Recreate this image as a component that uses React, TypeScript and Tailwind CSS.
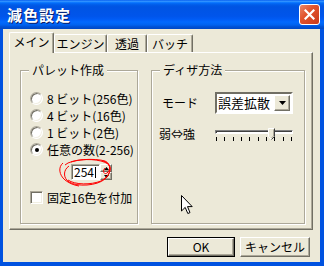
import React from 'react';

const FONT = "font-['Noto_Sans_CJK_JP','Liberation_Sans',sans-serif]";

const Radio = ({ checked }: { checked?: boolean }) => (
  <span className="relative flex items-center justify-center w-[13px] h-[13px] shrink-0 rounded-full bg-white border border-t-[#ACA899] border-l-[#ACA899] border-r-white border-b-white shadow-[inset_1px_1px_0_#716F64,inset_-1px_-1px_0_#F1EFE2]">
    {checked && <span className="w-[4px] h-[4px] rounded-full bg-black" />}
  </span>
);

const RadioRow = ({ label, checked }: { label: string; checked?: boolean }) => (
  <div className="flex items-center h-[17px] gap-[4px]">
    <Radio checked={checked} />
    <span className="text-[12px] leading-[14px] text-black whitespace-nowrap">{label}</span>
  </div>
);

const Bevel = ({ className = '', children }: { className?: string; children?: React.ReactNode }) => (
  <div className={`flex items-center justify-center bg-[#ECE9D8] border border-t-white border-l-white border-r-[#716F64] border-b-[#716F64] shadow-[inset_-1px_-1px_0_#ACA899] ${className}`}>
    {children}
  </div>
);

const Group = ({ title, className = '', children }: { title: string; className?: string; children?: React.ReactNode }) => (
  <div className={`relative border border-[#ACA899] shadow-[inset_1px_1px_0_#fff,1px_1px_0_#fff] ${className}`}>
    <span className="absolute -top-[9px] left-[8px] px-[3px] bg-[#ECE9D8] text-[12px] leading-[16px] text-black">{title}</span>
    {children}
  </div>
);

const Tab = ({ label, active, w }: { label: string; active?: boolean; w: string }) => (
  <div
    className={`flex items-center justify-center bg-[#ECE9D8] rounded-t-[2px] border-l border-t border-l-white border-t-white border-r border-r-[#716F64] shadow-[inset_-1px_0_0_#ACA899] text-[12px] leading-[14px] text-black ${w} ${
      active ? 'h-[21px] -mb-px relative z-10 pb-[2px]' : 'h-[18px]'
    }`}
  >
    {label}
  </div>
);

export default function App() {
  const ticks = Array.from({ length: 10 });

  return (
    <div className={`relative w-[324px] h-[266px] flex flex-col bg-[#0052E0] ${FONT}`}>
      {/* Title bar */}
      <div className="h-[29px] flex items-center justify-between pl-[7px] pr-[4px] bg-[linear-gradient(to_bottom,#0058EE_0%,#3593FF_4%,#288EFF_6%,#127DFF_8%,#036FFC_10%,#0262EE_14%,#0057E5_20%,#0054E3_24%,#0055EB_56%,#005BF5_66%,#026AFE_76%,#0062EF_86%,#0052D6_92%,#0048C4_100%)]">
        <span className="text-white font-bold text-[15px] leading-[16px] tracking-[1px] [text-shadow:1px_1px_0_#0A1E6A]">減色設定</span>
        <div className="w-[21px] h-[21px] rounded-[3px] border border-white bg-[linear-gradient(135deg,#E9876A_0%,#E2542D_40%,#C9391A_100%)] flex items-center justify-center">
          <svg width="11" height="11" viewBox="0 0 11 11">
            <path d="M1.5 1.5 L9.5 9.5 M9.5 1.5 L1.5 9.5" stroke="#fff" strokeWidth="2.2" strokeLinecap="square" />
          </svg>
        </div>
      </div>

      {/* Body */}
      <div className="flex-1 ml-[3px] mr-[4px] mb-[4px] bg-[#ECE9D8] flex flex-col pt-[3px] pl-[6px] pr-[7px]">
        {/* Tabs */}
        <div className="flex items-end h-[20px]">
          <Tab label="メイン" active w="w-[45px]" />
          <Tab label="エンジン" w="w-[53px]" />
          <Tab label="透過" w="w-[40px]" />
          <Tab label="バッチ" w="w-[46px]" />
        </div>

        {/* Panel */}
        <div className="h-[178px] border border-t-white border-l-white border-r-[#716F64] border-b-[#716F64] shadow-[inset_-1px_-1px_0_#ACA899] flex gap-[13px] pl-[10px] pt-[17px]">
          <Group title="パレット作成" className="w-[118px] h-[154px]">
            <div className="flex flex-col pt-[19px] pl-[9px]">
              <RadioRow label="8 ビット(256色)" />
              <RadioRow label="4 ビット(16色)" />
              <RadioRow label="1 ビット(2色)" />
              <RadioRow label="任意の数(2-256)" checked />

              <div className="flex mt-[6px] ml-[41px] h-[16px]">
                <div className="w-[29px] h-[16px] bg-white border border-t-[#ACA899] border-l-[#ACA899] border-r-white border-b-white shadow-[inset_1px_1px_0_#716F64] flex items-center pl-[2px]">
                  <span className="text-[12px] leading-[12px] text-black">254</span>
                  <span className="w-px h-[11px] bg-black ml-px" />
                </div>
                <div className="flex flex-col w-[12px] h-[16px]">
                  <Bevel className="h-[8px]">
                    <svg width="5" height="3" viewBox="0 0 5 3"><path d="M2.5 0 L5 3 L0 3 Z" fill="#000" /></svg>
                  </Bevel>
                  <Bevel className="h-[8px]">
                    <svg width="5" height="3" viewBox="0 0 5 3"><path d="M0 0 L5 0 L2.5 3 Z" fill="#000" /></svg>
                  </Bevel>
                </div>
              </div>

              <div className="flex items-center gap-[4px] mt-[11px] h-[13px]">
                <span className="w-[13px] h-[13px] shrink-0 bg-white border border-t-[#ACA899] border-l-[#ACA899] border-r-white border-b-white shadow-[inset_1px_1px_0_#716F64,inset_-1px_-1px_0_#F1EFE2]" />
                <span className="text-[12px] leading-[14px] text-black whitespace-nowrap">固定16色を付加</span>
              </div>
            </div>
          </Group>

          <Group title="ディザ方法" className="w-[154px] h-[154px]">
            <div className="flex flex-col pt-[21px]">
              <div className="flex items-center pl-[10px]">
                <span className="w-[53px] text-[12px] leading-[14px] text-black">モード</span>
                <div className="w-[78px] h-[22px] bg-white border-2 border-t-[#716F64] border-l-[#716F64] border-r-white border-b-white flex items-center justify-between pl-[1px] pr-px">
                  <span className="text-[13px] leading-[16px] text-black">誤差拡散</span>
                  <Bevel className="w-[16px] h-[16px]">
                    <svg width="7" height="4" viewBox="0 0 7 4"><path d="M0 0 L7 0 L3.5 4 Z" fill="#000" /></svg>
                  </Bevel>
                </div>
              </div>

              <div className="flex items-center mt-[13px] pl-[7px]">
                <span className="w-[56px] text-[12px] leading-[14px] text-black">弱⇔強</span>
                <div className="relative w-[78px] flex flex-col gap-[3px] pt-[2px]">
                  <div className="h-[4px] bg-white border border-t-[#808080] border-l-[#808080] border-r-white border-b-white shadow-[inset_1px_1px_0_#404040]" />
                  <div className="flex justify-between px-px">
                    {ticks.map((_, i) => (
                      <span key={i} className="w-px h-[4px] bg-black" />
                    ))}
                  </div>
                  <svg className="absolute top-0 left-[53px]" width="7" height="12" viewBox="0 0 7 12">
                    <path d="M0.5 0.5 H6.5 V8.5 L3.5 11.5 L0.5 8.5 Z" fill="#ECE9D8" stroke="none" />
                    <path d="M0.5 8.5 V0.5 H6" stroke="#fff" fill="none" />
                    <path d="M6.5 0.5 V8.5 L3.5 11.5" stroke="#404040" fill="none" />
                    <path d="M5.5 1.5 V8 L3.5 10" stroke="#ACA899" fill="none" />
                    <path d="M0.5 8.5 L3 11" stroke="#fff" fill="none" />
                  </svg>
                </div>
              </div>
            </div>
          </Group>
        </div>

        {/* Buttons */}
        <div className="flex justify-end gap-[5px] mt-[7px] pr-[3px]">
          <div className="w-[68px] h-[20px] border border-black">
            <Bevel className="w-full h-full">
              <span className="text-[12px] leading-[14px] text-black">OK</span>
            </Bevel>
          </div>
          <Bevel className="w-[70px] h-[20px]">
            <span className="text-[12px] leading-[14px] text-black">キャンセル</span>
          </Bevel>
        </div>
      </div>

      {/* Red hand-drawn scribble around the spin box */}
      <svg className="absolute left-[55px] top-[155px] pointer-events-none" width="60" height="36" viewBox="0 0 60 36">
        <path d="M10 10 C16 4 40 3 50 6 C57 9 56 18 50 24 C42 31 22 32 14 27 C8 23 8 15 14 11" stroke="#FF0000" fill="none" strokeWidth="1" />
        <path d="M16 7 C28 3 46 4 53 9 C58 14 54 22 46 26 C36 30 20 30 13 25" stroke="#FF0000" fill="none" strokeWidth="1" />
        <path d="M8 8 C3 12 4 20 10 25 C14 28 18 30 24 31" stroke="#FF0000" fill="none" strokeWidth="1" />
        <path d="M48 6 C55 8 57 14 52 18 C49 20 47 16 50 13" stroke="#FF0000" fill="none" strokeWidth="1" />
      </svg>

      {/* Mouse cursor */}
      <svg className="absolute left-[181px] top-[195px] pointer-events-none" width="12" height="20" viewBox="0 0 12 20">
        <path d="M0.5 0.5 V16 L4.2 12.4 L6.8 18.5 L9 17.6 L6.5 11.6 H11.2 Z" fill="#fff" stroke="#000" strokeWidth="1" />
      </svg>
    </div>
  );
}
